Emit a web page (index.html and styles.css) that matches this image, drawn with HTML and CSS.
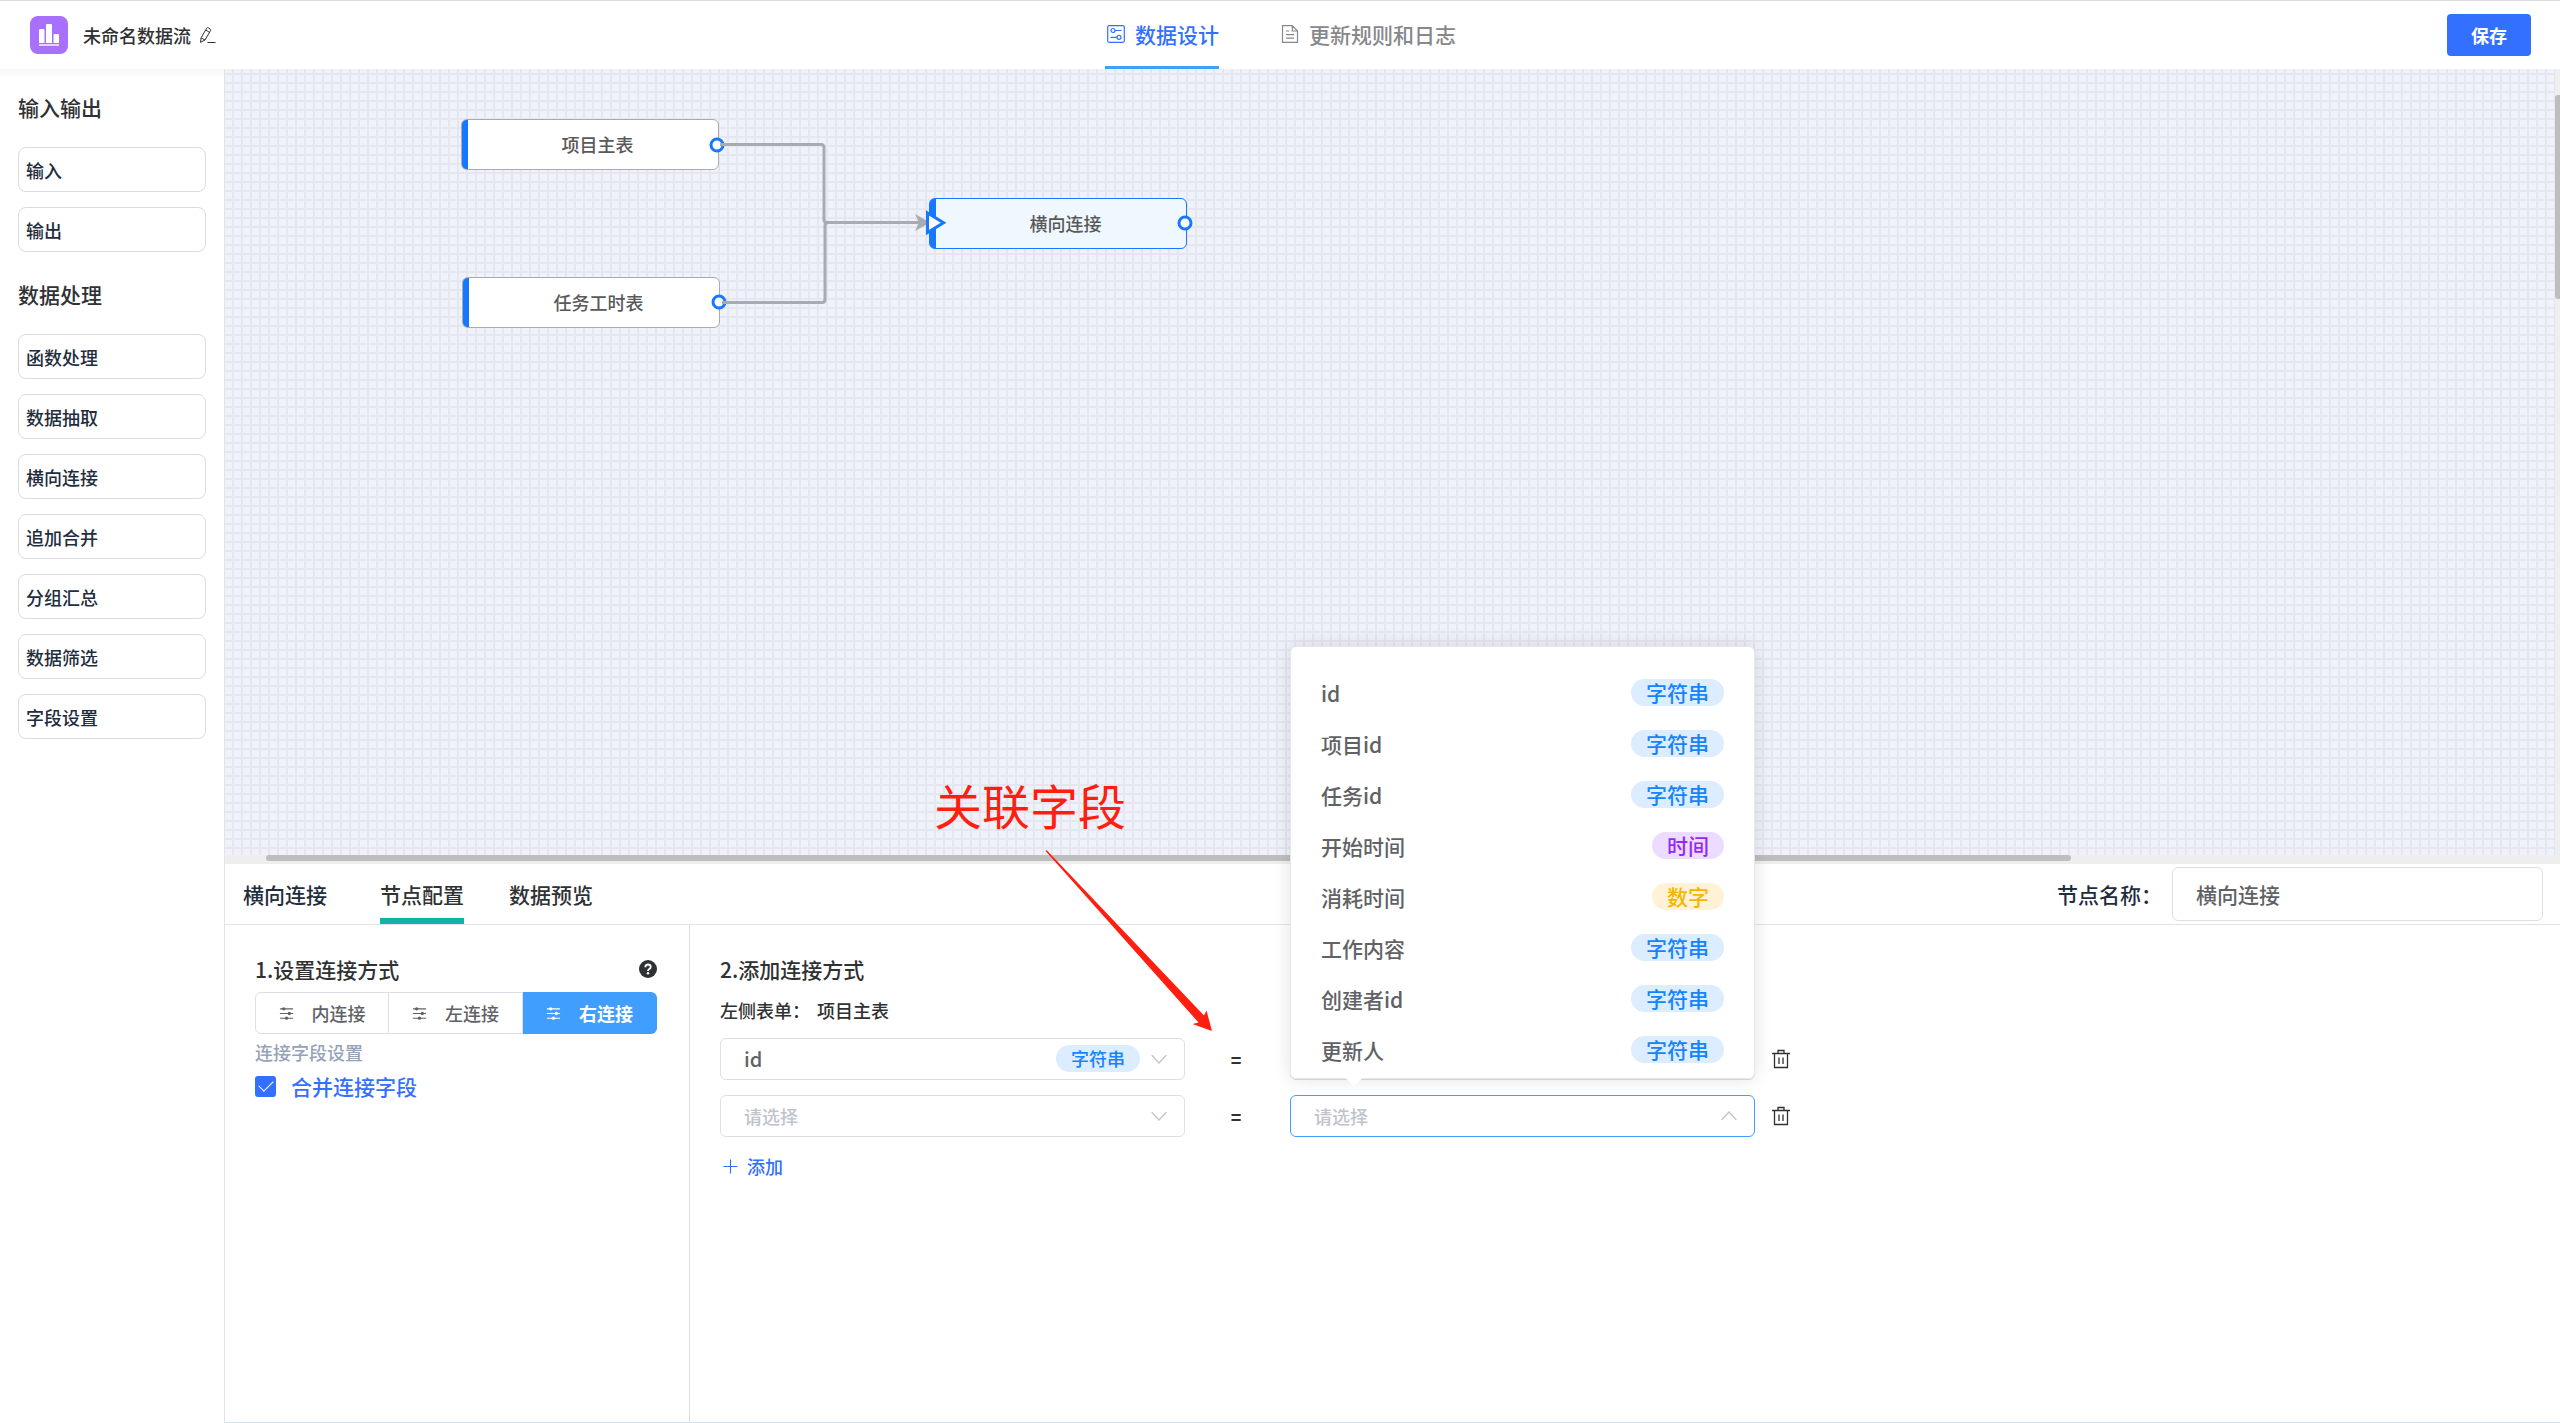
FILE: index.html
```html
<!DOCTYPE html>
<html lang="zh-CN">
<head>
<meta charset="utf-8">
<meta name="viewport" content="width=device-width, initial-scale=1">
<title>未命名数据流</title>
<link rel="stylesheet" href="styles.css">
</head>
<body>
<svg class="sprite" aria-hidden="true">
  <symbol id="i-sliders" viewBox="0 0 16 16"><path d="M1 3h14M1 8h14M1 13h14" fill="none" stroke="currentColor" stroke-width="1.2"/><circle cx="5" cy="3" r="1.8"/><circle cx="11" cy="8" r="1.8"/><circle cx="8" cy="13" r="1.8"/></symbol>
  <symbol id="i-chevron" viewBox="0 0 16 16"><path d="M1 4.500l7 7.500 7-7.500" fill="none" stroke="currentColor" stroke-width="1.300" stroke-linecap="round"/></symbol>
  <symbol id="i-trash" viewBox="0 0 20 20"><path d="M1 4.500h18M3.500 4.500v14h13v-14M7 4.500v-3h6v3M8 8.500v6.500M12 8.500v6.500" fill="none" stroke="currentColor" stroke-width="1.300"/></symbol>
</svg>

<header class="topbar">
  <div class="brand">
    <svg class="logo" viewBox="0 0 38 38" aria-hidden="true"><rect width="38" height="38" rx="8" fill="#a770ff"/><g fill="#fff"><path d="M9 27V14q0-1 1-1h3.500q1 0 1 1v13z"/><path d="M16 27V9q0-1 1-1h4q1 0 1 1v18z"/><path d="M23.500 27v-8q0-1 1-1H28q1 0 1 1v8z"/><rect x="9" y="28" width="20" height="2" opacity=".7"/></g></svg>
    <h1 class="title">未命名数据流</h1>
    <button class="icon-btn" type="button" aria-label="重命名"><svg class="icon-edit" viewBox="0 0 18 18"><path d="M1.500 16.300l.6-4.500L7.700 2.200q.6-.9 1.500-.4l2.100 1.300q.8.600.3 1.500L6 14zM6.800 4l3.600 2.300M2.100 11.800L6 14M8.500 16.500h8" fill="none" stroke="currentColor" stroke-width="1" stroke-linejoin="round"/></svg></button>
  </div>
  <nav class="modes">
    <a class="mode mode-active" href="#design"><svg class="icon-mode" viewBox="0 0 18 18"><g fill="none" stroke="currentColor" stroke-width="1.200"><rect x=".7" y=".7" width="16.600" height="16.600" rx="1.500"/><circle cx="6" cy="5.500" r="2"/><circle cx="12" cy="12.300" r="2"/><path d="M8 5.500h6.500M3.500 12.300H10"/></g></svg>数据设计</a>
    <a class="mode" href="#rules"><svg class="icon-mode" viewBox="0 0 18 18"><path d="M1.500.7h9.800L16.500 6v11.300h-15zM11.300.7V6h5.200M5 6h3M5 9.700h8M5 13.200h8" fill="none" stroke="currentColor" stroke-width="1.200"/></svg>更新规则和日志</a>
  </nav>
  <button class="save" type="button">保存</button>
</header>

<div class="workspace">
  <aside class="sidebar">
    <section class="group">
      <h2 class="group-title">输入输出</h2>
      <ul class="palette">
        <li class="palette-item">输入</li>
        <li class="palette-item">输出</li>
      </ul>
    </section>
    <section class="group">
      <h2 class="group-title">数据处理</h2>
      <ul class="palette">
        <li class="palette-item">函数处理</li>
        <li class="palette-item">数据抽取</li>
        <li class="palette-item">横向连接</li>
        <li class="palette-item">追加合并</li>
        <li class="palette-item">分组汇总</li>
        <li class="palette-item">数据筛选</li>
        <li class="palette-item">字段设置</li>
      </ul>
    </section>
  </aside>

  <main class="main">
    <div class="stage">
      <div class="canvas">
        <div class="node node-a">项目主表</div>
        <div class="node node-b">任务工时表</div>
        <div class="node node-c node-selected">横向连接</div>
        <svg class="wires" width="1000" height="300" aria-hidden="true">
          <g fill="#fff" stroke="#1677ff" stroke-width="3"><circle cx="492" cy="76" r="6"/><circle cx="494" cy="233" r="6"/><circle cx="960" cy="154" r="6"/></g>
          <g fill="none" stroke="#a8abb2" stroke-width="3"><path d="M495 75.500h101q3 0 3 3v72q0 3 3 3h92"/><path d="M497 233.500h100q3 0 3-3v-74q0-3 3-3"/></g>
          <path d="M690 145l15 8.500-15 8.500 4-8.500z" fill="#a8abb2"/>
          <path d="M702.500 144v19.500l16-9.700z" fill="#fff" stroke="#1677ff" stroke-width="3"/>
        </svg>
      </div>
      <div class="vbar"><div class="vthumb"></div></div>
      <div class="hbar"><div class="hthumb"></div></div>
    </div>

    <section class="panel">
      <div class="panel-head">
        <h2 class="panel-title">横向连接</h2>
        <nav class="tabs">
          <a class="tab tab-active" href="#config">节点配置</a>
          <a class="tab" href="#preview">数据预览</a>
        </nav>
        <label class="name-label" for="node-name">节点名称：</label>
        <input class="name-input" id="node-name" type="text" value="横向连接">
      </div>
      <div class="panel-body">
        <div class="join">
          <div class="join-head">
            <h3 class="step">1.设置连接方式</h3>
            <svg class="help" viewBox="0 0 18 18" role="img" aria-label="帮助"><circle cx="9" cy="9" r="9" fill="#303133"/><path d="M6.300 7.200Q6.400 4.500 9 4.500t2.700 2.400Q11.700 8 10.300 8.900 9 9.700 9 10.900" fill="none" stroke="#fff" stroke-width="1.800"/><circle cx="9" cy="13.200" r="1.200" fill="#fff"/></svg>
          </div>
          <div class="segments">
            <button class="segment" type="button"><svg class="icon-seg"><use href="#i-sliders"/></svg>内连接</button>
            <button class="segment" type="button"><svg class="icon-seg"><use href="#i-sliders"/></svg>左连接</button>
            <button class="segment segment-active" type="button"><svg class="icon-seg"><use href="#i-sliders"/></svg>右连接</button>
          </div>
          <p class="hint">连接字段设置</p>
          <label class="merge"><input class="check" type="checkbox" checked>合并连接字段</label>
        </div>

        <div class="fields">
          <h3 class="step">2.添加连接方式</h3>
          <p class="source"><span>左侧表单：</span><span>项目主表</span></p>
          <div class="pair">
            <div class="picker">
              <select class="select" aria-label="左侧字段 1"><option>id</option></select>
              <span class="tag tag-small picker-tag">字符串</span>
              <svg class="chevron"><use href="#i-chevron"/></svg>
            </div>
            <span class="equals">=</span>
            <div class="picker">
              <select class="select" aria-label="右侧字段 1"><option></option></select>
            </div>
            <button class="icon-btn" type="button" aria-label="删除第 1 行"><svg class="icon-trash"><use href="#i-trash"/></svg></button>
          </div>
          <div class="pair">
            <div class="picker">
              <select class="select select-empty" aria-label="左侧字段 2"><option>请选择</option></select>
              <svg class="chevron"><use href="#i-chevron"/></svg>
            </div>
            <span class="equals">=</span>
            <div class="picker">
              <select class="select select-empty select-open" aria-label="右侧字段 2"><option>请选择</option></select>
              <svg class="chevron chevron-up"><use href="#i-chevron"/></svg>
              <div class="dropdown">
                <ul class="options">
                  <li class="option">id<span class="tag">字符串</span></li>
                  <li class="option">项目id<span class="tag">字符串</span></li>
                  <li class="option">任务id<span class="tag">字符串</span></li>
                  <li class="option">开始时间<span class="tag tag-time">时间</span></li>
                  <li class="option">消耗时间<span class="tag tag-number">数字</span></li>
                  <li class="option">工作内容<span class="tag">字符串</span></li>
                  <li class="option">创建者id<span class="tag">字符串</span></li>
                  <li class="option">更新人<span class="tag">字符串</span></li>
                </ul>
              </div>
            </div>
            <button class="icon-btn" type="button" aria-label="删除第 2 行"><svg class="icon-trash"><use href="#i-trash"/></svg></button>
          </div>
          <button class="add" type="button"><svg class="icon-add" viewBox="0 0 16 16"><path d="M8 .5v15M.5 8h15" stroke="currentColor" stroke-width="1.200"/></svg>添加</button>
        </div>
      </div>
      <div class="callout">
        <span class="callout-text">关联字段</span>
        <svg class="callout-arrow" viewBox="0 0 170 182" aria-hidden="true"><path d="M.3.800L1.800.3 159 165.500l2.500-5 5.500 20.500-19.500-7 6-1.500z" fill="#ff1f10"/></svg>
      </div>
    </section>
  </main>
</div>
</body>
</html>
```
FILE: styles.css
```css
* { box-sizing: border-box; }

body {
  margin: 0;
  height: 100vh;
  display: flex;
  flex-direction: column;
  overflow: hidden;
  background: #fff;
  color: #303133;
  font-family: "Noto Sans CJK SC", "Noto Sans", sans-serif;
  font-size: 18px;
  font-weight: 500;
  line-height: 28px;
}

h1, h2, h3, p, ul { margin: 0; padding: 0; font-weight: 500; }
ul { list-style: none; }
a { color: inherit; text-decoration: none; }
button, input, select { font: inherit; color: inherit; }
button { border: 0; padding: 0; background: none; cursor: pointer; }
svg { display: block; flex: none; fill: currentColor; }
.sprite { position: absolute; width: 0; height: 0; }

/* top bar */
.topbar {
  flex: none;
  height: 69px;
  display: grid;
  grid-template-columns: 1fr auto 1fr;
  align-items: center;
  padding: 0 29px 0 30px;
  border-top: 1px solid #dcdcdc;
}
.brand { display: flex; align-items: center; }
.logo { width: 38px; height: 38px; margin-right: 15px; }
.title { font-size: 18px; }
.icon-btn { display: flex; }
.brand .icon-btn { margin-left: 8px; }
.icon-edit { width: 18px; height: 18px; }
.modes { display: flex; gap: 60px; align-self: stretch; font-size: 21px; }
.mode {
  display: flex;
  align-items: center;
  gap: 10px;
  padding-left: 2px;
  border-bottom: 3px solid transparent;
  color: #86888c;
}
.mode-active { color: #3370ff; border-color: #409eff; }
.icon-mode { width: 18px; height: 18px; }
.save {
  justify-self: end;
  width: 84px;
  height: 42px;
  border-radius: 4px;
  background: #3370ff;
  color: #fff;
  font-weight: 700;
}

/* work area */
.workspace { flex: 1; min-height: 0; display: flex; }
.sidebar {
  flex: none;
  width: 225px;
  padding: 22px 18px;
  border-right: 1px solid #e4e4e4;
  background: linear-gradient(#f7f7f7, #fff 10px);
}
.group { margin-bottom: 26px; }
.group-title { font-size: 21px; line-height: 32px; margin-bottom: 24px; }
.palette { display: grid; gap: 15px; }
.palette-item {
  height: 45px;
  padding: 0 7px;
  border: 1px solid #dcdcdc;
  border-radius: 8px;
  color: #1f2d3d;
  line-height: 44px;
}

.main { flex: 1; min-width: 0; display: flex; flex-direction: column; }
.stage {
  flex: 1;
  min-height: 0;
  display: grid;
  grid-template: 1fr 9px / 1fr 5px;
}
.canvas {
  position: relative;
  overflow: hidden;
  background:
    linear-gradient(90deg, #e4e7ee 2px, transparent 2px) 7px 0 / 9px 9px,
    linear-gradient(#e4e7ee 2px, transparent 2px) 0 4px / 9px 9px,
    #eff2fa;
}
.node {
  position: absolute;
  width: 258px;
  height: 51px;
  padding-left: 15px;
  border: 1px solid #a8abb2;
  border-radius: 6px;
  background: linear-gradient(90deg, #1677ff 6px, #fff 6px);
  color: #595959;
  line-height: 48px;
  text-align: center;
}
.node-a { left: 236px; top: 50px; }
.node-b { left: 237px; top: 208px; }
.node-c { left: 704px; top: 129px; }
.node-selected {
  border-color: #1677ff;
  background: linear-gradient(90deg, #1677ff 6px, #eff7ff 6px);
}
.wires { position: absolute; left: 0; top: 0; }
.vbar { padding-top: 26px; background: #eee; }
.vthumb { height: 204px; border-radius: 3px 0 0 3px; background: #bebebe; }
.hbar { grid-column: 1 / -1; background: #eee; padding-left: 41px; }
.hthumb { width: 78.7%; height: 6px; border-radius: 3px; background: #bebebe; }

/* configuration panel */
.panel {
  position: relative;
  flex: 0 0 559px;
  display: flex;
  flex-direction: column;
  background: #fff;
  border-bottom: 1px solid #d3e3ec;
}
.panel-head {
  flex: none;
  height: 61px;
  display: flex;
  align-items: center;
  padding: 0 17px 0 18px;
  border-bottom: 1px solid #e4e4e4;
  font-size: 21px;
}
.panel-title { width: 84px; margin-right: 53px; font-size: 21px; color: #1f2d3d; }
.tabs { display: flex; gap: 45px; align-self: stretch; margin-right: auto; }
.tab { display: flex; align-items: center; padding-top: 6px; border-bottom: 6px solid transparent; }
.tab-active { border-color: #0fb3a7; }
.name-label { color: #1f2d3d; margin-right: 10px; }
.name-input {
  width: 371px;
  height: 54px;
  padding: 0 23px;
  border: 1px solid #dcdfe6;
  border-radius: 6px;
  color: #606266;
}
.panel-body { flex: 1; display: flex; }
.join { width: 465px; padding: 30px 32px 0 30px; border-right: 1px solid #dcdcdc; }
.join-head { display: flex; align-items: center; justify-content: space-between; }
.step { font-size: 21px; line-height: 28px; }
.help { width: 18px; height: 18px; }
.segments { display: grid; grid-template-columns: repeat(3, 1fr); margin-top: 9px; }
.segment {
  display: flex;
  align-items: center;
  justify-content: center;
  gap: 18px;
  height: 42px;
  border: 1px solid #dcdfe6;
  border-left-width: 0;
  color: #606266;
}
.segment:first-child { border-left-width: 1px; border-radius: 6px 0 0 6px; }
.segment:last-child { border-radius: 0 6px 6px 0; }
.segment-active { background: #409eff; border-color: #409eff; color: #fff; font-weight: 700; }
.icon-seg { width: 15px; height: 15px; }
.hint { margin-top: 4px; color: #94a3b8; }
.merge { display: flex; align-items: center; gap: 15px; margin-top: 6px; color: #3370ff; font-size: 21px; }
.check {
  appearance: none;
  width: 21px;
  height: 21px;
  margin: 0;
  border-radius: 3px;
  background: #3370ff;
  display: grid;
  place-items: center;
}
.check:checked::before {
  content: "";
  width: 13px;
  height: 7px;
  margin-bottom: 4px;
  border: solid #fff;
  border-width: 0 0 1px 1px;
  transform: rotate(-45deg);
}

.fields { flex: 1; padding: 30px 30px 0; }
.source { display: flex; gap: 7px; margin: 13px 0 14px; }
.pair { display: flex; align-items: center; margin-bottom: 15px; }
.picker { position: relative; flex: 0 1 465px; }
.select {
  display: block;
  appearance: none;
  width: 100%;
  height: 42px;
  padding: 0 23px;
  border: 1px solid #dcdfe6;
  border-radius: 6px;
  background: #fff;
  color: #606266;
  font-size: 20px;
}
.select-empty { color: #c0c4cc; font-size: 18px; }
.select-open { border-color: #409eff; }
.chevron { position: absolute; right: 18px; top: 13px; width: 16px; height: 16px; color: #c0c4cc; }
.chevron-up { transform: rotate(180deg); }
.picker-tag { position: absolute; right: 45px; top: 7px; }
.tag {
  padding: 0 15px;
  border-radius: 14px;
  background: #dcedff;
  color: #1684fc;
  font-size: 21px;
  line-height: 27px;
}
.tag-small { font-size: 18px; }
.tag-time { background: #ecdcff; color: #9626ff; }
.tag-number { background: #fff2d6; color: #f7b500; }
.equals { flex: 0 0 105px; padding-right: 3px; text-align: center; font-weight: 700; }
.icon-trash { width: 20px; height: 20px; margin-left: 16px; }
.add { display: flex; align-items: center; gap: 9px; padding-left: 3px; color: #3370ff; }
.icon-add { width: 15px; height: 15px; }

.dropdown {
  position: absolute;
  left: 0;
  right: 0;
  bottom: calc(100% + 16px);
  z-index: 2;
  padding: 20px 0 3px;
  border: 1px solid #e4e7ed;
  border-radius: 6px;
  background: #fff;
  box-shadow: 0 0 18px rgba(0, 0, 0, .12);
}
.dropdown::after {
  content: "";
  position: absolute;
  left: 57px;
  bottom: -6px;
  width: 12px;
  height: 12px;
  background: #fff;
  transform: rotate(45deg);
}
.option {
  display: flex;
  align-items: center;
  justify-content: space-between;
  height: 51px;
  padding: 0 30px;
  color: #606266;
  font-size: 21px;
}

/* red note laid over the canvas and the panel */
.callout { position: absolute; left: 709px; top: -92px; z-index: 1; color: #ff1f10; pointer-events: none; }
.callout-text { display: block; font-size: 48px; font-weight: 400; line-height: 64px; }
.callout-arrow { width: 170px; height: 182px; margin: 14px 0 0 111px; }
```
